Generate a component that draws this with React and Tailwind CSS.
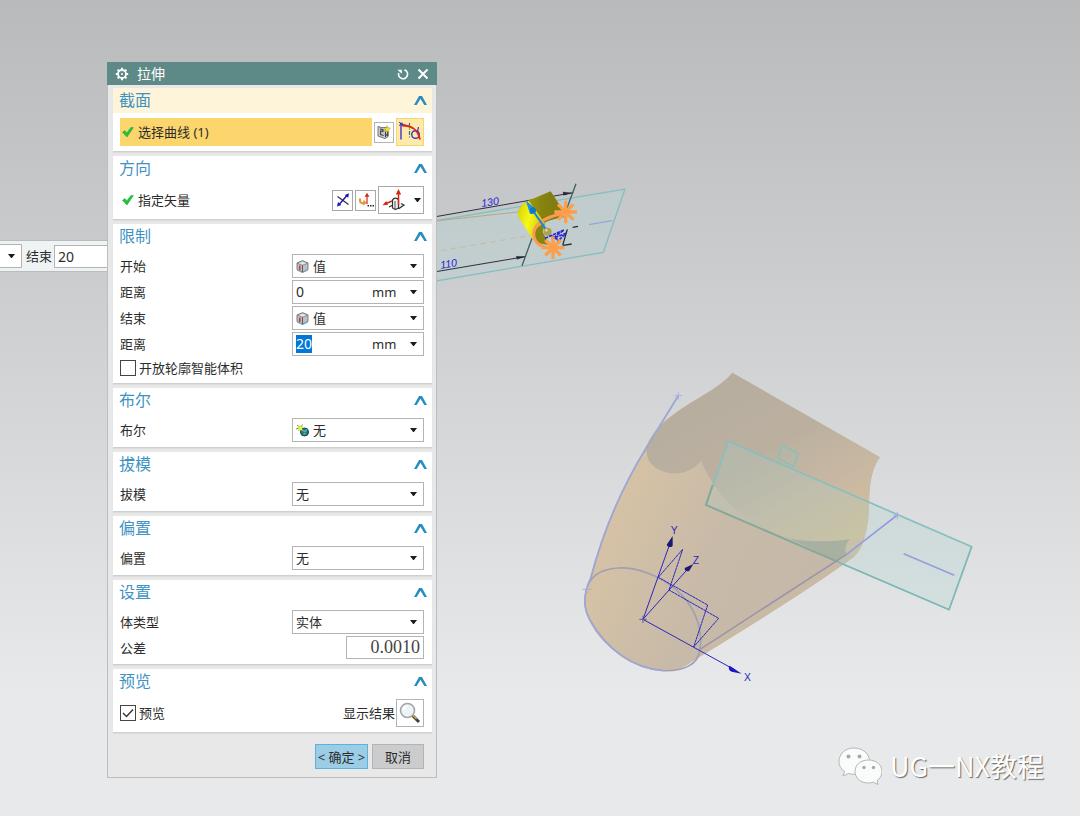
import { useState } from 'react'

/* ── Small icons ─────────────────────────────────── */

function Chevron() {
  return (
    <svg width="13" height="9" viewBox="0 0 13 9" aria-hidden="true">
      <path d="M0 9 5 0h3l5 9h-2.700L6.500 2.800 2.700 9z" fill="#2a8bbd" />
    </svg>
  )
}

function Arrow() {
  return (
    <svg className="pointer-events-none shrink-0" width="7" height="4" viewBox="0 0 7 4" aria-hidden="true">
      <path d="M0 0h7L3.9 4h-.8z" fill="#1c1c1c" />
    </svg>
  )
}

function Tick() {
  return (
    <svg className="shrink-0" width="12" height="12" viewBox="0 0 12 12" aria-hidden="true">
      <path d="M0.5 6.3 3 4.6l1.7 2.3L9 1.4l2.4.2L5 11z" fill="#1fc43a" stroke="#18a52f" strokeWidth=".5" />
    </svg>
  )
}

function Gear() {
  return (
    <svg width="14" height="14" viewBox="0 0 14 14" fill="none" stroke="#fff" aria-hidden="true">
      <circle cx="7" cy="7" r="4" strokeWidth="1.800" />
      <path d="M7 .8v2M7 11.200v2M.8 7h2M11.200 7h2M2.600 2.600l1.400 1.400M10 10l1.400 1.400M11.400 2.600L10 4M4 10l-1.400 1.400" strokeWidth="2" />
      <circle cx="7" cy="7" r="1" fill="#fff" stroke="none" />
    </svg>
  )
}

function Reset() {
  return (
    <svg width="12" height="12" viewBox="0 0 12 12" fill="none" stroke="#fff" aria-hidden="true">
      <path d="M7.500 1.900A4.500 4.500 0 1 1 1.700 5" strokeWidth="1.700" />
      <path d="M0.400 1.800h4.400v4z" fill="#fff" stroke="none" />
    </svg>
  )
}

function Close() {
  return (
    <svg width="12" height="12" viewBox="0 0 12 12" aria-hidden="true">
      <path d="M1.5 1.5l9 9M10.5 1.5l-9 9" stroke="#fff" strokeWidth="2" />
    </svg>
  )
}

function SketchIcon() {
  return (
    <svg width="14" height="14" viewBox="0 0 14 14" aria-hidden="true">
      <path d="M1 1.5l4 1.200 6-.4v9.400L8 13.500 1 11z" fill="#c9cdca" stroke="#555" strokeWidth=".8" />
      <path d="M3 4l3 .6v2L3.6 6v3.600l3 1M8.500 4.500v7.500M10.800 6v4.600L8 9" fill="none" stroke="#3c423e" strokeWidth="1.100" />
      <path d="M10 0.600l.8 2.200 2.800.4-2 1.700.6 2.400-2.200-1.400-2 1.200.6-2.400-1.600-1.400 2.200-.4z" fill="#f2e03a" stroke="#b39b17" strokeWidth=".4" />
    </svg>
  )
}

function CurveIcon() {
  return (
    <svg width="24" height="24" viewBox="0 0 24 24" fill="none" aria-hidden="true">
      <path d="M3 2.500v17M2 4l7 1.600 6 2.500" stroke="#3a35c8" strokeWidth="1.400" />
      <path d="M1 2l4 3.500M1 5.500l4-2.500" stroke="#3a35c8" strokeWidth="1" />
      <path d="M11.500 3v16" stroke="#26786c" strokeWidth="1.200" strokeDasharray="4 1.500 1 1.500" />
      <circle cx="17.500" cy="14.500" r="3.800" stroke="#3a35c8" strokeWidth="1.400" />
      <path d="M20.500 7l-1 5" stroke="#3a35c8" strokeWidth="1.200" />
      <path d="M4 5.500c9 0 15.500 3 18 14" stroke="#e02815" strokeWidth="1.800" />
    </svg>
  )
}

function FlipIcon() {
  return (
    <svg width="14" height="14" viewBox="0 0 14 14" aria-hidden="true">
      <path d="M1.500 3.500l11 8" stroke="#333" strokeWidth="1.200" />
      <path d="M3.500 11l7.500-8.500" stroke="#1a14b8" strokeWidth="1.400" />
      <path d="M13 0.300l-.8 4.400-3.400-2.800zM1 13.500l1-4.400 3.300 2.900z" fill="#1a14b8" />
    </svg>
  )
}

function VectorIcon() {
  return (
    <svg width="16" height="16" viewBox="0 0 16 16" aria-hidden="true">
      <path d="M2 6.500v2c0 2.600 3 3.400 5 2.600" fill="none" stroke="#e3963c" strokeWidth="2.200" />
      <path d="M5.500 7.500l3.300 3.300-4 3z" fill="#e3963c" />
      <path d="M9 12V4" stroke="#d22a12" strokeWidth="1.200" />
      <path d="M9 0.800l2.400 4H6.600z" fill="#d22a12" />
      <path d="M9.500 13h1.500v1.500H9.500zM12 13h1.500v1.500H12zM14.500 13H16v1.500h-1.500z" fill="#222" />
    </svg>
  )
}

function AxisBoxIcon() {
  return (
    <svg width="24" height="24" viewBox="0 0 24 24" aria-hidden="true">
      <path d="M7 19l4-2 6 3.500 5-3.500-3-1.500" fill="#f2f2f2" stroke="#333" strokeWidth="1.200" />
      <path d="M10.500 12c1-2.500 5-2.500 6 0v8l-3 1.500-3-1.500z" fill="#f2f2f2" stroke="#333" strokeWidth="1.200" />
      <path d="M13 13v8" fill="none" stroke="#555" strokeWidth="1" />
      <path d="M16.500 17V6M10 13l-6 2.500" stroke="#d22a12" strokeWidth="1.500" />
      <path d="M16.500 1l2.700 5.500h-5.400zM0.500 17.200l3.700-4.300 1.900 3.900z" fill="#d22a12" />
    </svg>
  )
}

function CubeIcon() {
  return (
    <svg className="shrink-0" width="13" height="13" viewBox="0 0 13 13" aria-hidden="true">
      <path d="M1 3l5.500-2.300L12 3v6.500l-5.500 2.800L1 9.500z" fill="#bcc0c2" stroke="#6e7478" strokeWidth=".9" />
      <path d="M1.200 3.200L6.500 5.200l5.300-2L6.500 1z" fill="#e3e6e8" stroke="#6e7478" strokeWidth=".7" />
      <path d="M6.500 5.200v7" stroke="#565b5f" strokeWidth="1" />
      <path d="M3.800 5.500v4.500" stroke="#e0331c" strokeWidth="1.500" />
      <path d="M1 10l5.500 2.600L12 10" fill="none" stroke="#6ba0cf" strokeWidth=".9" />
    </svg>
  )
}

function NoneIcon() {
  return (
    <svg className="shrink-0" width="13" height="13" viewBox="0 0 13 13" aria-hidden="true">
      <circle cx="8.500" cy="8" r="4" fill="#1d7f6c" stroke="#1d3d46" strokeWidth="1" />
      <path d="M6.500 6.500l2.500 1 2-2M7.500 10.500l2-1.500" stroke="#5bb8e0" strokeWidth="1.300" fill="none" />
      <path d="M1 1l6 5M6.500.500l-4 6.500M0 5l7-2" stroke="#2b9c86" strokeWidth=".9" />
      <path d="M4.200.8l1 1.800 2.600.3-1.700 1.600.4 2.400-2.300-1.200-2 1.200.3-2.400L.8 3.200l2.400-.5z" fill="#f1ea2a" />
    </svg>
  )
}

function Magnifier() {
  return (
    <svg width="22" height="22" viewBox="0 0 22 22" aria-hidden="true">
      <path d="M13.500 13.500l6.500 6.500" stroke="#3f3f3f" strokeWidth="3" />
      <path d="M13 12.500l4.500 4.500" stroke="#d3b53e" strokeWidth="1.200" />
      <circle cx="8.500" cy="8.500" r="7" fill="#f0f3f5" stroke="#a2a4a6" strokeWidth="1.600" />
      <path d="M4.200 8a4.500 4.500 0 0 1 4-4" fill="none" stroke="#fff" strokeWidth="1.800" />
    </svg>
  )
}

/* ── Dialog building blocks ─────────────────────────────────── */

function Section({ title, active, children }) {
  const [open, setOpen] = useState(true)
  return (
    <section className="bg-white border-b border-[#cfcfcf] shadow-[0_1px_1px_#dcdcdc]">
      <h2 className={active ? 'bg-[#fef4d9]' : ''}>
        <button
          type="button"
          aria-expanded={open}
          onClick={() => setOpen(o => !o)}
          className="flex h-[25px] w-full items-center justify-between pl-[6px] pr-[5px] text-[16px] leading-[25px] text-[#3f93c3]"
        >
          {title}
          <Chevron />
        </button>
      </h2>
      {open && <div className="flex flex-col gap-[2px] py-[5px] pl-[7px] pr-2">{children}</div>}
    </section>
  )
}

function Row({ label, id, children }) {
  return (
    <div className="flex items-center justify-between">
      <label htmlFor={id}>{label}</label>
      {children}
    </div>
  )
}

function Dropdown({ id, icon, value }) {
  return (
    <div className="flex h-6 w-[132px] items-center gap-1 border border-[#b4b4b4] bg-white pl-[3px] pr-[6px]">
      {icon}
      <select id={id} className="min-w-0 flex-1 appearance-none bg-transparent outline-none">
        <option>{value}</option>
      </select>
      <Arrow />
    </div>
  )
}

function Distance({ id, value, selected }) {
  return (
    <div className="flex h-6 w-[132px] items-center justify-between border border-[#b4b4b4] bg-white pl-[3px] pr-[6px]">
      <input
        id={id}
        defaultValue={value}
        className={`h-[18px] w-4 text-sm outline-none ${selected ? 'bg-[#0078d7] text-white' : ''}`}
      />
      <div className="flex items-center gap-1">
        <select aria-label="单位" className="w-[34px] appearance-none bg-transparent outline-none">
          <option>mm</option>
        </select>
        <Arrow />
      </div>
    </div>
  )
}

function IconButton({ label, className, children }) {
  return (
    <button
      type="button"
      aria-label={label}
      className={`flex shrink-0 items-center justify-center border ${className}`}
    >
      {children}
    </button>
  )
}

function Check({ label, checked }) {
  const [on, setOn] = useState(Boolean(checked))
  return (
    <label className="flex items-center gap-[3px]">
      <span className="relative flex">
        <input
          type="checkbox"
          checked={on}
          onChange={e => setOn(e.target.checked)}
          className="h-4 w-4 appearance-none border border-[#444] bg-white"
        />
        {on && (
          <svg className="pointer-events-none absolute inset-0" width="16" height="16" viewBox="0 0 16 16">
            <path d="M3 8l3.500 3.500 6.500-7" fill="none" stroke="#333" strokeWidth="1.400" />
          </svg>
        )}
      </span>
      {label}
    </label>
  )
}

function ExtrudeDialog() {
  return (
    <form
      aria-label="拉伸"
      onSubmit={e => e.preventDefault()}
      className="relative w-[330px] border border-t-0 border-[#bdbdbd] bg-[#e8e8e8]"
    >
      <header className="-mx-px flex h-[23px] items-center bg-[#5d8a86] pl-2 pr-2 text-white">
        <Gear />
        <h1 className="flex-1 pl-2 text-sm">拉伸</h1>
        <div className="flex gap-2">
          <button type="button" aria-label="重置"><Reset /></button>
          <button type="button" aria-label="关闭"><Close /></button>
        </div>
      </header>

      <div className="flex flex-col gap-1 pt-[3px] pl-[5px] pr-1">
        <Section title="截面" active>
          <div className="flex items-center gap-[2px]">
            <div className="flex h-7 flex-1 items-center gap-1 bg-[#fcd66c] pl-[2px]">
              <Tick />
              选择曲线 (1)
            </div>
            <IconButton label="绘制截面" className="h-[21px] w-5 border-[#b4b4b4] bg-white"><SketchIcon /></IconButton>
            <IconButton label="曲线" className="h-7 w-7 border-[#f5d673] bg-[#fdeaaa]"><CurveIcon /></IconButton>
          </div>
        </Section>

        <Section title="方向">
          <div className="flex items-center gap-[2px]">
            <div className="flex flex-1 items-center gap-1 pl-[2px]">
              <Tick />
              指定矢量
            </div>
            <IconButton label="反向" className="h-[21px] w-[21px] border-[#a8a8a8] bg-white"><FlipIcon /></IconButton>
            <IconButton label="矢量对话框" className="h-[21px] w-[21px] border-[#a8a8a8] bg-white"><VectorIcon /></IconButton>
            <IconButton label="矢量类型" className="h-7 w-[46px] gap-2 border-[#a8a8a8] bg-white"><AxisBoxIcon /><Arrow /></IconButton>
          </div>
        </Section>

        <Section title="限制">
          <Row id="start" label="开始"><Dropdown id="start" icon={<CubeIcon />} value="值" /></Row>
          <Row id="startDist" label="距离"><Distance id="startDist" value="0" /></Row>
          <Row id="end" label="结束"><Dropdown id="end" icon={<CubeIcon />} value="值" /></Row>
          <Row id="endDist" label="距离"><Distance id="endDist" value="20" selected /></Row>
          <Check label="开放轮廓智能体积" />
        </Section>

        <Section title="布尔">
          <Row id="bool" label="布尔"><Dropdown id="bool" icon={<NoneIcon />} value="无" /></Row>
        </Section>

        <Section title="拔模">
          <Row id="draft" label="拔模"><Dropdown id="draft" value="无" /></Row>
        </Section>

        <Section title="偏置">
          <Row id="offset" label="偏置"><Dropdown id="offset" value="无" /></Row>
        </Section>

        <Section title="设置">
          <Row id="body" label="体类型"><Dropdown id="body" value="实体" /></Row>
          <Row id="tol" label="公差">
            <input
              id="tol"
              defaultValue="0.0010"
              className="h-[23px] w-[78px] border border-[#b4b4b4] bg-white pr-[3px] text-right font-['Liberation_Serif',serif] text-lg leading-5 text-[#444] outline-none"
            />
          </Row>
        </Section>

        <Section title="预览">
          <div className="flex items-center justify-between">
            <Check label="预览" checked />
            <div className="flex items-center gap-px">
              <span>显示结果</span>
              <IconButton label="显示结果" className="h-7 w-7 border-[#b4b4b4] bg-white"><Magnifier /></IconButton>
            </div>
          </div>
        </Section>
      </div>

      <footer className="flex justify-end gap-1 pt-[11px] pr-3 pb-2">
        <button type="submit" className="h-[25px] w-[53px] border border-[#5fb1dc] bg-[#9bcde6] whitespace-nowrap">
          &lt; 确定 &gt;
        </button>
        <button type="button" className="h-[25px] w-[52px] border border-[#b3b4b6] bg-[#cbccce]">取消</button>
      </footer>
    </form>
  )
}

// On-screen value bar, partly hidden behind the dialog
function ValueBar() {
  return (
    <div className="absolute top-[240px] left-0 flex h-8 w-[120px] items-center gap-1 border-y border-[#b9bbbd] bg-[#eef3f4]">
      <button type="button" aria-label="选项" className="flex h-6 w-[22px] items-center justify-end border border-l-0 border-[#b4b4b4] bg-white pr-[6px]">
        <Arrow />
      </button>
      <label htmlFor="barEnd" className="w-6 whitespace-nowrap">结束</label>
      <input
        id="barEnd"
        defaultValue="20"
        className="h-[23px] min-w-0 flex-1 border border-[#b4b4b4] bg-white pl-[3px] text-sm outline-none"
      />
    </div>
  )
}

/* ── Graphics window ─────────────────────────────────── */

// Eight-armed marker on the end points of the curve
function Star({ x, y }) {
  return (
    <path
      transform={`translate(${x} ${y})`}
      d="M-34 0H34M0-34V34M-23-23L23 23M-23 23L23-23"
      stroke="#fb9f4a"
      strokeWidth="10"
    />
  )
}

function UpperModel() {
  return (
    <g transform="translate(430 170) scale(.33333)" fill="none">
      <path d="M0 155L585 57 520 247 0 336z" fill="#b9cfd0" fillOpacity=".5" />
      <path d="M0 155L585 57 520 247 0 336" stroke="#85bfc0" strokeWidth="4" />
      <path d="M0 155L280 124" stroke="#b5a88a" strokeWidth="3" />
      <path d="M32 242L315 194" stroke="#c3bfae" strokeWidth="4" strokeDasharray="18 12" />
      <path d="M0 143L430 68M0 308L285 260" stroke="#2c2f3c" strokeWidth="3" />
      <path d="M425 69l-26-3 2 10zM285 260l-26-1 2 9z" fill="#22242e" stroke="#22242e" />
      <path d="M438 41L408 122M306 205L276 287" stroke="#3f6263" strokeWidth="4" />
      <path d="M477 164L547 152" stroke="#95a6dc" strokeWidth="4" />
      <path d="M428 172l16-3M400 226l25-4M412 178L398 226" stroke="#22303a" strokeWidth="4" />

      <path d="M362 64L412 140C370 145 310 160 312 200L264 138C262 115 280 98 305 88z" fill="url(#olive)" />
      <path d="M264 138C262 115 280 98 296 92L345 160C315 172 304 190 312 214z" fill="url(#yellow)" />
      <path d="M345 160C310 172 304 200 325 220L360 226 338 186z" fill="#87840f" />
      <path d="M345 205L402 180 366 206 408 190 382 215M352 190l40 24" stroke="#2a26d8" strokeWidth="5" strokeDasharray="10 3" />
      <path d="M405 128C340 142 305 165 312 200C318 224 340 234 368 234" stroke="#fb9b50" strokeWidth="9" />

      <path d="M352 184L300 110" stroke="#1b86dd" strokeWidth="6" />
      <path d="M287 91L318 118 300 132z" fill="#1f8fe8" />
      <path d="M300 117c5-8 16-6 18 3s-8 12-16 12z" fill="#1473c4" />
      <Star x={407} y={126} />
      <Star x={369} y={233} />
      <circle cx="353" cy="185" r="12" fill="#ada050" />
      <circle cx="349" cy="181" r="4" fill="#e0d797" />

      <g fill="#2a26d8" fontFamily="Liberation Sans, sans-serif" fontSize="32" fontStyle="italic">
        <text x="155" y="111" transform="rotate(-8 155 111)">130</text>
        <text x="32" y="296" transform="rotate(-8 32 296)">110</text>
      </g>
    </g>
  )
}

function LowerModel() {
  return (
    <g transform="translate(560 360) scale(.33333)" fill="none">
      <path
        d="M517 38L960 292C930 330 928 390 927 440C925 520 905 570 880 592C760 680 560 805 395 905C365 930 340 934 310 932C220 925 75 840 75 720C75 690 85 670 92 650C125 530 180 390 260 255C300 150 460 110 517 38z"
        fill="url(#front)"
      />
      <path
        d="M517 38L960 292C930 330 928 390 927 440C925 490 918 515 908 545C870 545 760 548 700 535C600 515 480 440 423 303C400 330 370 342 335 340C290 335 255 310 260 262C300 150 460 110 517 38z"
        fill="url(#back)"
      />
      <path d="M690 536C750 547 820 545 870 538C850 560 855 580 862 590L835 606z" fill="#a9a694" />
      <path d="M870 538C850 560 855 580 880 592C900 575 912 545 910 535z" fill="#d0bd9d" />
      <path d="M395 905C420 890 425 880 425 866L862 582 885 588C760 680 560 805 395 905z" fill="#c9baa6" />

      <path d="M505 244L1235 560 1167 749 438 435z" fill="#a8d0cc" fillOpacity=".24" />
      <path d="M438 435L505 244 1235 560 1167 749 832 605" stroke="#86bfc0" strokeWidth="5" />
      <path d="M458 375L438 435 832 605" stroke="#86a898" strokeWidth="6" />
      <path d="M1235 560L1167 749 832 605" stroke="#7fb8b6" strokeWidth="4" />
      <path d="M668 256L714 280 702 320 653 294z" fill="#a8c0b4" fillOpacity=".3" stroke="#88bfbc" strokeWidth="4" />

      <path d="M355 107L260 262C180 390 125 530 92 655C70 700 70 745 90 780C140 870 220 925 310 932C370 934 415 915 420 868C440 720 290 620 175 624C130 627 100 645 88 668" stroke="#a0a0b2" strokeWidth="5" />
      <path d="M355 107L260 262C180 390 125 530 92 655C70 700 70 745 90 780C140 870 220 925 310 932" stroke="#9da9de" strokeWidth="4" />
      <path d="M420 868L860 583" stroke="#9a95a8" strokeWidth="5" />
      <path d="M860 583L1012 465M1031 581L1183 646" stroke="#969ddd" strokeWidth="5" />
      <path d="M344 107h22M355 97v22M68 688h26M81 678v22M1000 466h24M1012 456v22" stroke="#a5b0dd" strokeWidth="3" />

      {/* datum coordinate system */}
      <g stroke="#2a25c0" strokeWidth="3">
        <path d="M249 778L330 550M249 778L385 625M249 778L525 930" />
        <path d="M295 652L368 568 327 690 476 775 401 861 443 735 295 652" strokeDasharray="9 1" />
        <path d="M238 778h22M249 767v22" stroke="#5a58a0" />
      </g>
      <path d="M338 528l-18 26c2 8 16 9 18 3zM400 612l-26 12c-1 8 8 13 14 8z" fill="#1b1a6e" />
      <path d="M545 941l-36-24c-5 5-2 16 6 18z" fill="#1a18c8" />
      <g fill="#2a25c0" fontFamily="Liberation Sans, sans-serif" fontSize="31">
        <text x="332" y="523">Y</text>
        <text x="398" y="612">Z</text>
        <text x="552" y="963">X</text>
      </g>
    </g>
  )
}

function Viewport() {
  return (
    <svg
      className="absolute inset-0 h-full w-full"
      viewBox="0 0 1080 816"
      preserveAspectRatio="xMinYMin meet"
      aria-hidden="true"
    >
      <defs>
        <linearGradient id="front" x1="0" y1=".6" x2=".75" y2=".9">
          <stop offset="0" stopColor="#d7c3a5" />
          <stop offset=".5" stopColor="#c8baa8" />
          <stop offset="1" stopColor="#c4b8a9" />
        </linearGradient>
        <linearGradient id="back" x1=".2" y1="0" x2=".9" y2="1">
          <stop offset="0" stopColor="#b6ad9f" />
          <stop offset=".45" stopColor="#bbb0a0" />
          <stop offset=".75" stopColor="#cab9a2" />
          <stop offset="1" stopColor="#d3c097" />
        </linearGradient>
        <linearGradient id="yellow" x1="0" y1=".3" x2="1" y2=".7">
          <stop offset="0" stopColor="#d8d80a" />
          <stop offset=".4" stopColor="#f8f814" />
          <stop offset="1" stopColor="#c4c00e" />
        </linearGradient>
        <linearGradient id="olive" x1="0" y1="0" x2="1" y2="0">
          <stop offset="0" stopColor="#b0ac0c" />
          <stop offset=".5" stopColor="#858210" />
          <stop offset="1" stopColor="#7c7912" />
        </linearGradient>
      </defs>
      <UpperModel />
      <LowerModel />
    </svg>
  )
}

function Watermark() {
  return (
    <div className="absolute right-9 bottom-[31px] flex items-center gap-2 text-[27px] leading-[38px] text-white [text-shadow:1px_1px_1px_#666]">
      <svg width="44" height="38" viewBox="0 0 44 38" aria-hidden="true">
        <g fill="#fafbfb" stroke="#b4b6b7" strokeWidth="1">
          <path d="M16 1C7 1 1 7 1 14.500c0 4.500 2 7.500 5.500 10L5 29l5.500-2.500c2 .6 4 .8 6 .8C26 27 31.500 21 31.500 14S25 1 16 1z" />
          <path d="M30.500 13C22.500 13 17 18 17 24.500S22.500 36 30.500 36c1.800 0 3.200-.2 4.800-.8L40 37.500 39 33.800c3-2 5-5.500 5-9.300C44 18 38.500 13 30.500 13z" />
        </g>
        <g fill="#a6a8a9">
          <circle cx="10.500" cy="9.500" r="2" />
          <circle cx="21.500" cy="9.500" r="2" />
          <circle cx="26" cy="20.500" r="1.700" />
          <circle cx="35.500" cy="20.500" r="1.700" />
        </g>
      </svg>
      <span className="font-['Noto_Sans_CJK_SC',sans-serif]">UG一NX教程</span>
    </div>
  )
}

export default function App() {
  return (
    <main className="relative min-h-screen overflow-hidden bg-linear-to-b from-[#b9babc] to-[#e8e9eb] to-85% pt-[62px] pb-9 pl-[107px] font-['Noto_Sans','Noto_Sans_CJK_SC',sans-serif] text-[13px] leading-5 text-[#2c2c2c]">
      <Viewport />
      <ValueBar />
      <ExtrudeDialog />
      <Watermark />
    </main>
  )
}
